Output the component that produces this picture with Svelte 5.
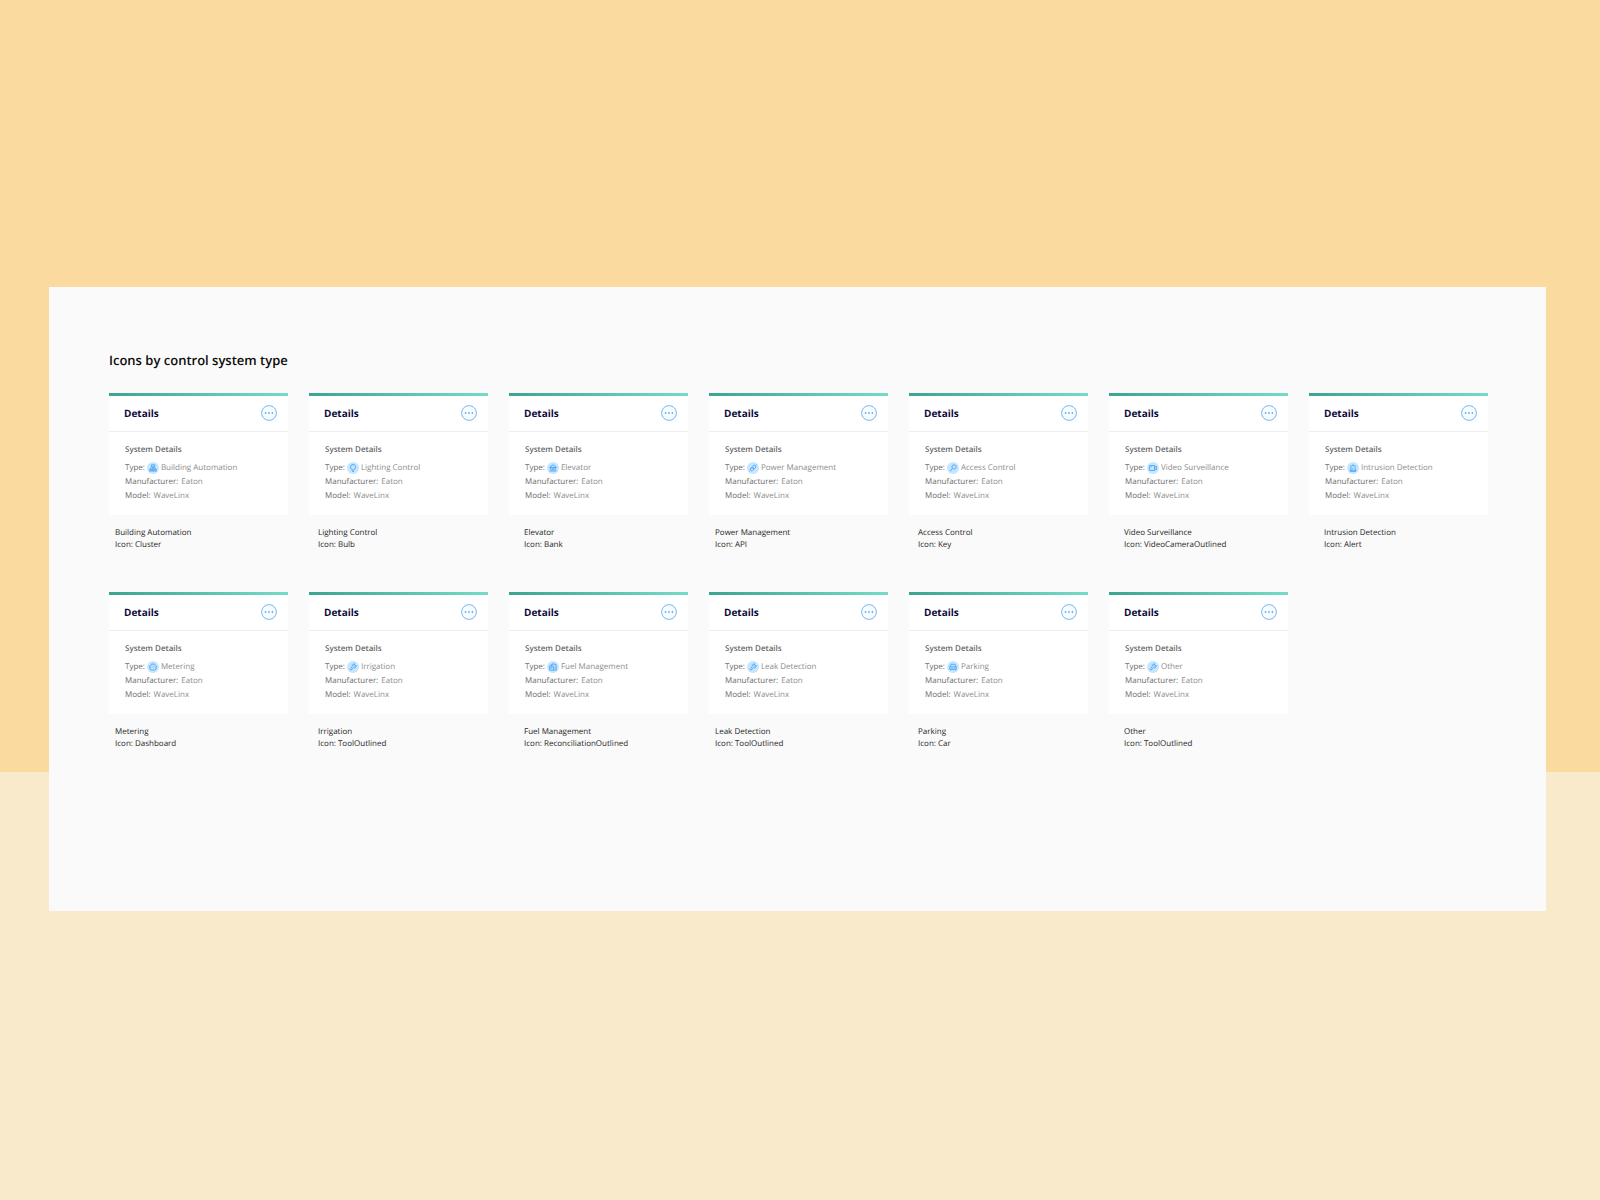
<script lang="ts">
  type System = { type: string; icon: string; glyph: string };

  const SYSTEMS: System[] = [
    { type: "Building Automation", icon: "Cluster", glyph: "cluster" },
    { type: "Lighting Control", icon: "Bulb", glyph: "bulb" },
    { type: "Elevator", icon: "Bank", glyph: "bank" },
    { type: "Power Management", icon: "API", glyph: "api" },
    { type: "Access Control", icon: "Key", glyph: "key" },
    { type: "Video Surveillance", icon: "VideoCameraOutlined", glyph: "video" },
    { type: "Intrusion Detection", icon: "Alert", glyph: "alert" },
    { type: "Metering", icon: "Dashboard", glyph: "dashboard" },
    { type: "Irrigation", icon: "ToolOutlined", glyph: "tool" },
    { type: "Fuel Management", icon: "ReconciliationOutlined", glyph: "reconciliation" },
    { type: "Leak Detection", icon: "ToolOutlined", glyph: "tool" },
    { type: "Parking", icon: "Car", glyph: "car" },
    { type: "Other", icon: "ToolOutlined", glyph: "tool" },
  ];

  // stroked outlines on a 16 unit grid
  const GLYPHS: Record<string, string> = {
    cluster: "M4.6 1.6h6.8v4H4.6zM8 5.6v5M3 10.6V8h10v2.6M1.4 10.6h3.2v3.8H1.4zM6.4 10.6h3.2v3.8H6.4zM11.4 10.6h3.2v3.8h-3.2z",
    bulb: "M8 1a5 5 0 0 0-2.6 9.3V12h5.2v-1.7A5 5 0 0 0 8 1zM6 14.8h4",
    bank: "M1.5 6 8 1.5 14.5 6v1h-13zM3.5 7v6M6.5 7v6M9.5 7v6M12.5 7v6M1 14h14",
    api: "M6.4 5.4 8.6 3.2a3 3 0 0 1 4.2 4.2l-2.2 2.2zM5.4 6.4 3.2 8.6a3 3 0 0 0 4.2 4.2l2.2-2.2zM12.8 3.2 15 1M3.2 12.8 1 15M6.6 7.6 5 9.2M8.4 9.4l1.6-1.6",
    key: "M5.8 6a4.3 4.3 0 1 1 8.6 0 4.3 4.3 0 0 1-8.6 0M7 9 1.6 14.4M3.2 12.8l1.8 1.8",
    video: "M1.2 3h9.8v10H1.2zM11 6.5l3.8-2v7l-3.8-2M3.4 5.8h2.2",
    alert: "M3.6 12.4V7.4a4.4 4.4 0 0 1 8.8 0v5M2.4 12.4h11.2v2.4H2.4zM8 .4v2M2.4 2.6l1.3 1.3M13.6 2.6l-1.3 1.3M6.6 10V7.8",
    dashboard: "M3.8 14a6.8 6.8 0 1 1 8.4 0zM7.6 9.2l2.8-2.8M8 3v1.4M3 8.6h1.4M11.8 8.6H13M4.6 5l.9.9",
    tool: "M14 4.2 11.4 6.8 9.2 4.6 11.8 2A4.2 4.2 0 0 0 6.4 7.4L1.6 12.2l2.2 2.2 4.8-4.8A4.2 4.2 0 0 0 14 4.2z",
    reconciliation: "M4 6V3.5h3V1.6h4v1.9h3.4v10.9H9M1.4 6h7.4v8.4H1.4zM3.2 8.4h3.6M3.2 11h2M11.8 8.6v2.8",
    car: "M1.6 7.6h12.8v5.2H1.6zM2.2 7.6 4 2.6h8l1.8 5M4 10.2h1.2M10.8 10.2H12M6.8 10.4h2.4M2.8 12.8v1.8M13.2 12.8v1.8",
  };
</script>

<main>
  <section class="board">
    <h1>Icons by control system type</h1>
    <div class="grid">
      {#each SYSTEMS as s}
        <figure>
          <article class="card">
            <header>
              <h2>Details</h2>
              <button type="button" aria-label="More actions for {s.type}">
                <svg viewBox="0 0 16 16" aria-hidden="true">
                  <circle class="ring" cx="8" cy="8" r="7.4" />
                  <circle cx="4.6" cy="8" r="0.9" />
                  <circle cx="8" cy="8" r="0.9" />
                  <circle cx="11.4" cy="8" r="0.9" />
                </svg>
              </button>
            </header>
            <div class="body">
              <h3>System Details</h3>
              <dl>
                <div class="row type">
                  <dt>Type:</dt>
                  <dd>
                    <span class="badge">
                      <svg viewBox="0 0 16 16" aria-hidden="true"><path d={GLYPHS[s.glyph]} /></svg>
                    </span>
                    {s.type}
                  </dd>
                </div>
                <div class="row">
                  <dt>Manufacturer:</dt>
                  <dd>Eaton</dd>
                </div>
                <div class="row">
                  <dt>Model:</dt>
                  <dd>WaveLinx</dd>
                </div>
              </dl>
            </div>
          </article>
          <figcaption>
            <div>{s.type}</div>
            <div>Icon: {s.icon}</div>
          </figcaption>
        </figure>
      {/each}
    </div>
  </section>
</main>

<style>
  :global(body) {
    margin: 0;
  }
  main {
    box-sizing: border-box;
    min-height: 100vh;
    padding: 287px 54px 60px 49px;
    background: linear-gradient(#fbda9f 0 772px, #f9eacc 772px);
    font-family: "Open Sans", "Noto Sans", sans-serif;
    text-rendering: geometricPrecision;
  }
  h1,
  h2,
  h3,
  dl,
  dd,
  figure {
    margin: 0;
  }
  .board {
    padding: 63px 58px 161px 60px;
    background: #fafafa;
  }
  h1 {
    margin-bottom: 23px;
    font-size: 13px;
    font-weight: 600;
    line-height: 20px;
    color: #0c0c0c;
  }
  .grid {
    display: grid;
    grid-template-columns: repeat(7, 1fr);
    gap: 41px 21px;
  }
  .card {
    background: linear-gradient(90deg, #3da492, #74dcc6) top / 100% 3px no-repeat #fff;
    padding-top: 2px;
  }
  header {
    display: flex;
    align-items: center;
    justify-content: space-between;
    height: 36px;
    padding: 0 11px 0 15px;
    border-bottom: 1px solid #ededed;
  }
  h2 {
    font-size: 10px;
    font-weight: 700;
    color: #0f0b38;
  }
  button {
    display: flex;
    padding: 0;
    border: none;
    border-radius: 50%;
    background: #f5fbff;
    cursor: pointer;
  }
  button svg {
    width: 16px;
    height: 16px;
    fill: #6fadeb;
  }
  .ring {
    fill: none;
    stroke: #7db8ee;
  }
  .body {
    padding: 11px 16px 12px;
    font-size: 8px;
    line-height: 14px;
  }
  h3 {
    margin-bottom: 4px;
    font-size: 8px;
    font-weight: 600;
    color: #666;
  }
  .row {
    display: flex;
    gap: 3px;
    white-space: nowrap;
  }
  .type {
    gap: 2px;
  }
  dt {
    font-weight: 500;
    color: #6c6c6c;
  }
  dd {
    display: flex;
    align-items: center;
    gap: 2px;
    color: #8c8c8c;
  }
  .badge {
    display: grid;
    place-items: center;
    width: 12px;
    height: 12px;
    border-radius: 50%;
    background: #c6e6ff;
  }
  .badge svg {
    width: 8px;
    height: 8px;
    fill: none;
    stroke: #3d9cf5;
    stroke-width: 1.6;
  }
  figcaption {
    margin-top: 12px;
    padding-left: 15px;
    font-size: 8px;
    line-height: 12px;
    color: #262626;
    white-space: nowrap;
  }
  figure:nth-child(7n + 1) figcaption,
  figure:nth-child(7n + 4) figcaption {
    padding-left: 6px;
  }
  figure:nth-child(7n + 2) figcaption,
  figure:nth-child(7n + 5) figcaption {
    padding-left: 9px;
  }
</style>
